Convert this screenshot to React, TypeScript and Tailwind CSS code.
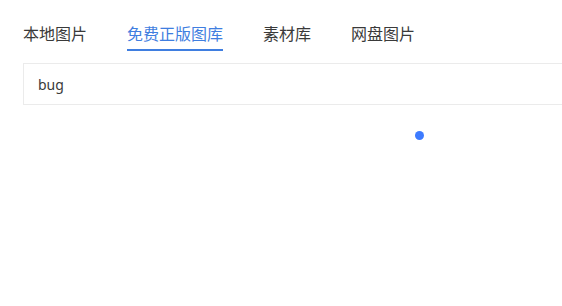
import { useState } from "react";

const tabs = ["本地图片", "免费正版图库", "素材库", "网盘图片"];

export default function App() {
  const [active, setActive] = useState(1);
  return (
    <div
      className="w-[562px] h-[306px] bg-white overflow-hidden pl-[23px] pt-[18px]"
      style={{ fontFamily: '"Noto Sans", "Noto Sans CJK SC", sans-serif' }}
    >
      {/* tabs */}
      <div className="flex gap-[40px]">
        {tabs.map((t, i) => (
          <button
            key={t}
            type="button"
            onClick={() => setActive(i)}
            className={
              i === active
                ? "h-[33px] text-[16px] leading-[24px] text-[#3f7ee0] border-b-2 border-[#3f7ee0]"
                : "h-[33px] text-[16px] leading-[24px] text-[#3a3a3a] border-b-2 border-transparent"
            }
          >
            {t}
          </button>
        ))}
      </div>

      {/* search box */}
      <div className="mt-[12px] h-[42px] w-[560px] border border-[#ebebeb] flex items-center pl-[14px] text-[14px] text-[#3a3a3a]">
        bug
      </div>

      {/* loading dot */}
      <div className="flex pl-[392px] pt-[26px]">
        <span className="block w-[9px] h-[9px] rounded-full bg-[#3d7bff]" />
      </div>
    </div>
  );
}
